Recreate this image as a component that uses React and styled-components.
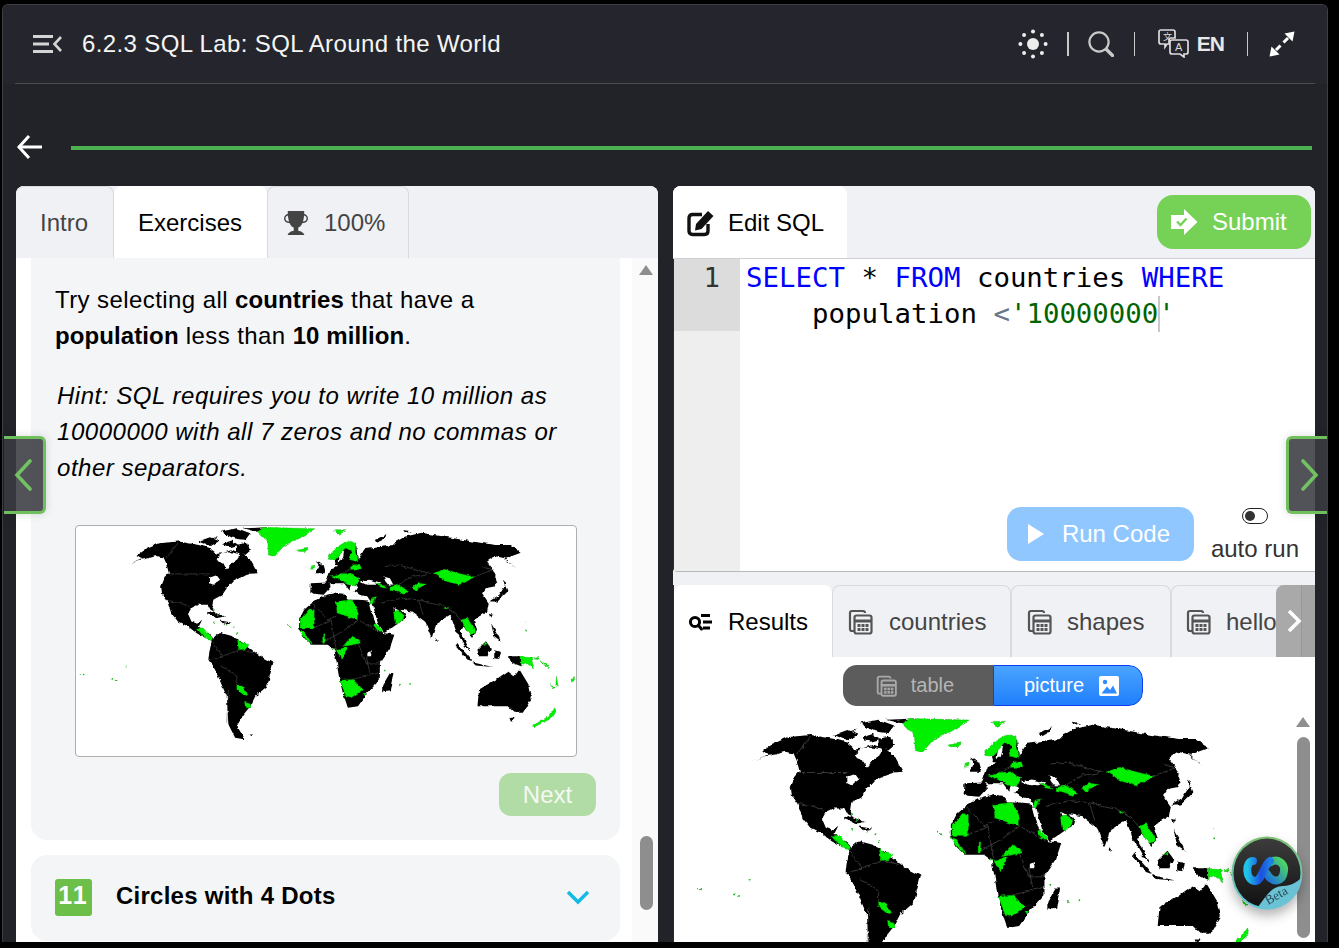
import React from "react"
import styled, { createGlobalStyle } from "styled-components"
import { BsTrophyFill } from "react-icons/bs"

const GlobalStyle = createGlobalStyle`
  html, body {
    margin: 0;
    height: 948px;
    overflow: hidden;
    background: #000;
    font-family: "Liberation Sans", Arial, sans-serif;
  }
  * { box-sizing: border-box; }
`

const Shell = styled.div`
  position: relative;
  width: 1326px;
  height: 938px;
  margin: 4px 0 0 2px;
  background: #212329;
  border: 1px solid #3c3e44;
  border-bottom: 0;
  border-radius: 6px 6px 0 0;
  display: flex;
  flex-direction: column;
  overflow: hidden;
`

const Header = styled.header`
  height: 79px;
  flex: none;
  background: #25262d;
  padding: 0 12px;
`

const HeaderInner = styled.div`
  height: 100%;
  display: flex;
  align-items: center;
  border-bottom: 1px solid #4a4c51;
  padding: 0 20px 1px 18px;
  color: #f2f2f2;
`

const Title = styled.h1`
  margin: 0 0 0 19px;
  font-size: 24px;
  font-weight: 400;
  letter-spacing: .37px;
  color: #f5f5f5;
`

const HeaderTools = styled.div`
  margin-left: auto;
  display: flex;
  align-items: center;
`

const Divider = styled.span`
  width: ${({ $w }) => $w || 1}px;
  height: 24px;
  background: #c8c8c8;
  margin: 0 ${({ $r }) => $r}px 0 ${({ $l }) => $l}px;
`

const LangText = styled.span`
  font-size: 21px;
  font-weight: 700;
  letter-spacing: -1px;
  color: #e8e8e8;
  margin-left: 8px;
`

const ProgressRow = styled.div`
  height: 102px;
  flex: none;
  display: flex;
  align-items: flex-end;
  padding: 0 15px 26px 14px;
  gap: 28px;
`

const ProgressLine = styled.div`
  flex: 1;
  height: 4px;
  margin-bottom: 10px;
  background: #4caf50;
`

const Workspace = styled.main`
  flex: 1;
  min-height: 0;
  display: flex;
  gap: 15px;
  padding: 0 12px 0 13px;
`

const LeftPanel = styled.section`
  width: 642px;
  display: flex;
  flex-direction: column;
  background: #fff;
  border-radius: 8px 8px 0 0;
  overflow: hidden;
`

const RightColumn = styled.section`
  width: 642px;
  display: flex;
  flex-direction: column;
  background: #f0f1f5;
  border-radius: 8px 8px 0 0;
  overflow: hidden;
`

const TabBar = styled.div`
  position: relative;
  height: ${({ $line }) => ($line ? 73 : 72)}px;
  flex: none;
  display: flex;
  align-items: stretch;
  background: #f0f1f5;
  border-bottom: ${({ $line }) => ($line ? "1px solid #d0d0d4" : "0")};
  overflow: hidden;
`

const Tab = styled.div`
  width: ${({ $w }) => $w}px;
  flex: none;
  display: flex;
  align-items: center;
  padding-left: ${({ $pad }) => $pad}px;
  gap: ${({ $gap }) => $gap || 0}px;
  font-size: 24px;
  color: ${({ $active }) => ($active ? "#000" : "#444")};
  background: ${({ $active }) => ($active ? "#fff" : "transparent")};
  border: 1px solid #d9dade;
  border-width: 1px 1px 0 ${({ $first }) => ($first ? 0 : 1)}px;
  border-color: ${({ $active }) => ($active ? "#fff" : "#d9dade")};
  border-radius: 8px 8px 0 0;
`

const LeftBody = styled.div`
  flex: 1;
  min-height: 0;
  display: flex;
  padding-left: 15px;
`

const ExerciseList = styled.div`
  width: 589px;
  flex: none;
  display: flex;
  flex-direction: column;
  gap: 15px;
`

const ExerciseCard = styled.article`
  height: 582px;
  flex: none;
  padding: 24px;
  background: #f4f5f7;
  border-radius: 0 0 16px 16px;
  display: flex;
  flex-direction: column;
`

const Para = styled.p`
  margin: 0 0 24px;
  padding-left: ${({ $italic }) => ($italic ? 2 : 0)}px;
  font-size: 24px;
  line-height: 36px;
  color: #000;
  letter-spacing: ${({ $italic }) => ($italic ? ".53px" : ".42px")};
  font-style: ${({ $italic }) => ($italic ? "italic" : "normal")};
`

const Strong = styled.b`
  letter-spacing: .1px;
`

const MapFrame = styled.div`
  width: 502px;
  height: 233px;
  margin: 15px 0 16px 20px;
  background: #fff;
  border: 1px solid #aeaeae;
  border-radius: 4px;
  overflow: hidden;
`

const NextButton = styled.button`
  align-self: flex-end;
  width: 97px;
  height: 43px;
  border: 0;
  border-radius: 12px;
  background: #b2dca5;
  color: #f5f9f3;
  font: 24px "Liberation Sans", Arial, sans-serif;
`

const CollapsedCard = styled.article`
  height: 86px;
  flex: none;
  display: flex;
  align-items: center;
  padding: 0 30px 2px 24px;
  background: #f4f5f7;
  border-radius: 16px;
`

const NumberBadge = styled.span`
  width: 37px;
  height: 37px;
  border-radius: 3px;
  background: #6cc04a;
  color: #fff;
  font-size: 25px;
  font-weight: 700;
  letter-spacing: 2px;
  text-align: center;
  line-height: 33px;
`

const CardTitle = styled.h3`
  margin: -2px 0 0 24px;
  font-size: 24px;
  font-weight: 700;
  letter-spacing: .25px;
  color: #000;
`

const Chevron = styled.svg`
  margin-left: auto;
`

const ScrollColumn = styled.div`
  flex: 1;
  display: flex;
  flex-direction: column;
  align-items: center;
  padding: 7px 6px 32px 19px;
  background: linear-gradient(to right, #fff 12px, #fafafa 12px);
`

const ScrollArrow = styled.div`
  width: 0;
  height: 0;
  border: 7.5px solid transparent;
  border-top: 0;
  border-bottom: 10px solid #8e8e8e;
`

const ScrollThumb = styled.div`
  width: 13px;
  height: ${({ $h }) => $h}px;
  margin-top: ${({ $top }) => $top};
  border-radius: 7px;
  background: #8e8e8e;
`

const EditorPanel = styled.div`
  height: 386px;
  flex: none;
  display: flex;
  flex-direction: column;
  background: #fff;
`

const SubmitButton = styled.button`
  position: absolute;
  top: 9px;
  right: 4px;
  width: 154px;
  height: 54px;
  border: 0;
  border-radius: 16px;
  background: #76d157;
  color: #fff;
  font: 24px "Liberation Sans", Arial, sans-serif;
  display: flex;
  align-items: center;
  gap: 14px;
  padding: 0 0 0 14px;
`

const EditorBody = styled.div`
  flex: 1;
  min-height: 0;
  display: flex;
  border-left: 1px solid #2a2a2a;
  border-bottom: 1px solid #b9b9b9;
  border-radius: 0 0 0 4px;
`

const Gutter = styled.div`
  width: 66px;
  flex: none;
  background: #eee;
`

const ActiveLineNumber = styled.div`
  height: 72px;
  padding: 0 20px 0 0;
  background: #dcdcdc;
  color: #333;
  text-align: right;
  font: 27.4px/38px "DejaVu Sans Mono", monospace;
`

const CodeArea = styled.div`
  flex: 1;
  min-width: 0;
  display: flex;
  flex-direction: column;
  padding: 1px 16px 10px 6px;
`

const CodeLine = styled.div`
  font: 27.4px/36px "DejaVu Sans Mono", monospace;
  white-space: pre;
  color: #000;
  padding-left: ${({ $indent }) => $indent || 0}px;
`

const Keyword = styled.span`
  color: #0000ff;
`

const StringToken = styled.span`
  color: #006400;
`

const OperatorToken = styled.span`
  color: #687687;
`

const Caret = styled.span`
  display: inline-block;
  width: 2px;
  height: 36px;
  margin: 0 -2px 0 0;
  vertical-align: top;
  background: #c8c8c8;
`

const EditorFooter = styled.div`
  margin-top: auto;
  display: flex;
  align-items: flex-end;
  justify-content: flex-end;
  gap: 17px;
`

const RunButton = styled.button`
  width: 187px;
  height: 54px;
  border: 0;
  border-radius: 14px;
  background: #90c7ff;
  color: #fff;
  font: 24px "Liberation Sans", Arial, sans-serif;
  display: flex;
  align-items: center;
  gap: 18px;
  padding: 0 0 0 21px;
`

const AutoRun = styled.div`
  display: flex;
  flex-direction: column;
  align-items: center;
  gap: 11px;
  margin-bottom: -2px;
  font-size: 24px;
  line-height: 28px;
  color: #333;
`

const MiniSwitch = styled.span`
  width: 26px;
  height: 16px;
  padding: 2px;
  border: 1.5px solid #222;
  border-radius: 8px;
  background: #fff;
  display: flex;
`

const MiniKnob = styled.span`
  width: 10px;
  height: 10px;
  border-radius: 50%;
  background: #333;
`

const PanelGap = styled.div`
  height: 13px;
  flex: none;
`

const ResultsPanel = styled.div`
  position: relative;
  flex: 1;
  min-height: 0;
  display: flex;
  flex-direction: column;
  background: #fff;
  border-left: 1px solid #2a2a2a;
`

const TabScroll = styled.div`
  position: absolute;
  right: 0;
  top: 0;
  bottom: 0;
  width: 39px;
  background: #a9a9a9;
  border-radius: 8px 0 0 0;
  display: flex;
  align-items: center;
  padding-left: 10px;
  box-shadow: inset -13px 0 0 #a4a4a4, inset -14px 0 0 #999;
`

const ViewToggle = styled.div`
  align-self: center;
  margin: 8px 3px 0 0;
  width: 300px;
  height: 41px;
  flex: none;
  display: flex;
  border-radius: 14px;
  overflow: hidden;
  font-size: 20px;
`

const ToggleOption = styled.div`
  flex: 0 0 150px;
  display: flex;
  align-items: center;
  justify-content: center;
  gap: ${({ $on }) => ($on ? 15 : 13)}px;
  padding: ${({ $on }) => ($on ? "0 0 0 7px" : "0 6px 0 0")};
  color: ${({ $on }) => ($on ? "#fff" : "#b5b5b5")};
  background: ${({ $on }) => ($on ? "linear-gradient(#4ba4ff, #1f7ffc)" : "#5c5c5c")};
  border: ${({ $on }) => ($on ? "1px solid #0c3ef0" : "0")};
  border-radius: ${({ $on }) => ($on ? "0 14px 14px 0" : "0")};
`

const ResultBody = styled.div`
  flex: 1;
  min-height: 0;
  display: flex;
  overflow: hidden;
`

const ResultMapArea = styled.div`
  width: 622px;
  flex: none;
  padding: 11px 0 0 18px;
`

const ResultScroll = styled.div`
  flex: 1;
  display: flex;
  flex-direction: column;
  align-items: center;
  padding: 11px 6px 0 0;
`

const BetaBubble = styled.div`
  position: absolute;
  right: 12px;
  bottom: 32px;
  width: 72px;
  height: 74px;
  filter: drop-shadow(0 6px 6px rgba(0, 0, 0, .3));
`

const SideNav = styled.div`
  position: absolute;
  top: 431px;
  ${({ $side }) => ($side === "left" ? "left: 1px;" : "right: 0;")}
  width: ${({ $side }) => ($side === "left" ? 42 : 41)}px;
  height: 78px;
  display: flex;
  align-items: center;
  justify-content: ${({ $side }) => ($side === "left" ? "flex-start" : "center")};
  padding-left: ${({ $side }) => ($side === "left" ? 10 : 4)}px;
  background: rgba(58, 59, 65, .88);
  border: 3px solid #6fc05d;
  border-width: ${({ $side }) => ($side === "left" ? "3px 3px 3px 0" : "3px 0 3px 3px")};
  border-radius: ${({ $side }) => ($side === "left" ? "0 6px 6px 0" : "6px 0 0 6px")};
  box-shadow: 0 0 8px rgba(0, 0, 0, .15);
`

const MapImage = styled.svg`
  display: block;
  width: ${({ $w }) => $w}px;
  height: ${({ $h }) => $h}px;
`

const BLACK_LAND = [
  "192,145 237,125 222,115 242,100 287,80 347,75 407,85 440,95 462,112 477,110 505,100 537,110 560,130 582,170 560,172 537,180 507,195 490,215 477,235 450,250 447,270 452,285 442,280 434,265 405,265 385,275 375,292 385,315 402,322 417,310 407,330 440,355 455,372 440,368 420,362 400,350 375,330 345,315 325,290 312,252 298,232 295,210 305,185 318,170 310,140 302,122 280,118 258,125 228,130",
  "405,75 440,62 470,75 440,88",
  "470,45 520,35 560,50 545,70 510,65",
  "520,85 548,78 562,100 545,115 520,105",
  "540,35 615,32 580,45",
  "425,72 465,58 450,68",
  "475,82 505,72 525,85 500,92",
  "450,285 485,300 465,304 432,292",
  "470,312 505,318 480,322",
  "445,372 470,350 505,360 525,370 565,400 590,420 628,440 610,510 575,540 560,570 540,595 520,630 545,670 515,665 495,625 490,540 455,460 435,430",
  "555,655 568,655 560,660",
  "740,200 790,198 802,208 778,235 748,232 738,225",
  "755,130 775,145 782,170 755,170 765,150",
  "810,130 845,90 875,90 880,135 860,145 830,150 815,145",
  "785,200 800,155 860,135 900,130 905,200",
  "899,98 944,92 984,85 994,75 1019,60 1069,48 1139,60 1219,75 1289,85 1334,85 1366,108 1334,120 1318,128 1344,150 1351,158 1319,125 1289,118 1264,135 1279,155 1294,200 1284,210 1260,215 1249,230 1269,260 1264,285 1224,310 1234,340 1219,365 1194,330 1185,345 1215,408 1195,385 1172,345 1154,295 1114,320 1099,365 1079,315 1039,285 1009,280 1027,300 994,325 959,350 939,320 924,265 908,240 885,235 870,225 880,208 860,200 855,222 835,195 815,190 860,150 880,130",
  "705,335 705,310 720,280 745,258 780,238 815,228 835,232 850,250 880,250 910,252 925,310 955,350 988,355 975,395 945,440 945,490 905,535 880,570 850,575 835,530 825,490 815,430 810,400 790,385 740,385 720,365",
  "975,470 985,470 975,525 955,528 955,505",
  "1110,365 1118,375 1110,378",
  "1175,380 1220,435 1205,430 1170,390",
  "1220,438 1280,452 1230,448",
  "1235,400 1260,375 1275,395 1265,420 1240,420",
  "1285,405 1305,410 1298,428 1285,425",
  "1275,320 1290,345 1305,375 1285,360",
  "1270,255 1300,235 1322,200 1310,190 1325,225 1295,255",
  "1275,150 1290,180 1282,180",
  "1272,290 1282,292 1276,304",
  "1320,420 1365,420 1365,450 1340,440",
  "1235,570 1240,520 1290,490 1325,465 1345,480 1360,460 1390,510 1397,545 1370,590 1345,590 1325,570 1280,570",
  "1330,605 1345,605 1335,618",
  "1015,40 1040,45 1020,48",
  "930,70 965,52 950,72 935,78",
]

const WHITE_WATER = [
  "458,125 480,108 505,108 528,112 522,128 505,140 490,160 480,140 465,135",
  "440,183 460,176 470,190 450,205 440,200",
  "885,195 910,190 950,198 940,205 905,205",
  "955,180 975,185 985,205 970,205 962,195",
  "985,272 1005,282 990,285",
  "905,410 917,405 920,420 905,420",
  "825,100 840,95 835,125 820,135",
]

const GREEN_LAND = [
  "582,45 600,32 752,36 707,65 662,85 632,120 614,115 612,75",
  "700,100 730,95 725,105 705,105",
  "805,42 845,42 825,52",
  "742,148 752,145 750,157 740,158",
  "792,118 820,90 850,72 875,80 872,105 880,135 855,130 862,105 845,95 825,115 812,130 795,128",
  "865,145 885,142 890,160 860,158",
  "800,178 830,172 860,170 885,185 875,205 850,205 825,190",
  "400,335 420,335 450,370 425,365",
  "522,368 535,380 560,385 545,398 525,400",
  "520,505 540,510 553,535 545,540 520,520",
  "543,555 560,560 560,575 545,575",
  "815,255 860,250 878,270 878,310 818,290",
  "708,310 735,278 750,280 750,335 708,335",
  "705,340 720,345 745,385 730,375",
  "775,352 782,352 780,378 775,378",
  "835,390 865,355 890,380 850,388",
  "815,400 850,392 830,430",
  "825,492 865,490 895,520 860,545 845,540",
  "925,325 935,320 955,345 940,345",
  "895,532 905,530 900,542",
  "930,200 955,205 965,215 945,212",
  "975,212 1000,203 1030,225 1020,235 995,225 975,222",
  "1040,215 1060,200 1085,203 1060,215 1055,225",
  "1104,170 1139,158 1179,170 1227,182 1184,205 1144,195",
  "920,245 935,240 925,265 915,262",
  "985,282 1002,282 1018,298 1000,325 990,318",
  "1135,272 1150,272 1145,278",
  "1188,310 1205,305 1230,345 1215,360 1200,340",
  "1252,385 1262,378 1260,390",
  "1365,420 1395,425 1405,458 1380,440 1365,450",
  "1400,428 1418,420 1412,430",
  "1398,630 1450,598 1465,575 1470,590 1445,612 1405,632",
  "1420,430 1450,455 1445,460",
  "1470,480 1475,510 1468,505",
  "1452,505 1465,515 1458,518",
  "1510,490 1525,484 1515,498",
]

const GREEN_DOTS = [
  [455, 280], [465, 295], [452, 318], [490, 325], [512, 330], [522, 350], [672, 328], [680, 332],
  [55, 473], [65, 475], [150, 488], [160, 492], [190, 452], [1005, 505], [1035, 503], [960, 463],
  [1378, 320], [1380, 340], [808, 400], [1140, 270],
]

const BORDER_LINES = [
  "318,172 440,172",
  "345,80 310,125",
  "312,252 350,258 380,272",
  "445,370 475,420 440,430",
  "475,420 530,400 570,410",
  "475,450 520,480 520,505",
  "495,520 490,620",
  "745,260 790,310 815,300",
  "750,335 800,310 815,400",
  "780,375 835,345 880,310 950,350",
  "880,380 905,440 945,440",
  "860,490 905,480 940,470",
  "905,420 915,470",
  "945,205 1000,205 1040,180 1100,170",
  "1222,182 1280,160 1250,150",
  "960,150 1000,145 1090,170",
  "1075,300 1060,250 1095,260 1140,270 1170,290",
  "1010,245 1060,250",
  "950,260 1010,245",
  "810,180 880,150",
  "1170,290 1195,320",
]

const WorldMap = ({ w, h }) => (
  <MapImage $w={w} $h={h} viewBox="42 28 1486 695" preserveAspectRatio="none">
    <defs>
      <filter id={`coast${w}`} x="0" y="0" width="100%" height="100%" colorInterpolationFilters="sRGB">
        <feTurbulence type="fractalNoise" baseFrequency="0.06" numOctaves="3" seed="4" result="noise" />
        <feDisplacementMap in="SourceGraphic" in2="noise" scale="11" xChannelSelector="R" yChannelSelector="G" />
        <feGaussianBlur stdDeviation="0.5" />
      </filter>
    </defs>
    <g filter={`url(#coast${w})`}>
      <g fill="#000">
        {BLACK_LAND.map((p) => <polygon key={p} points={p} />)}
      </g>
      <g fill="#fff">
        {WHITE_WATER.map((p) => <polygon key={p} points={p} />)}
      </g>
      <g fill="none" stroke="#5a5a5a" strokeWidth="1.6">
        {BORDER_LINES.map((p) => <polyline key={p} points={p} />)}
      </g>
      <g fill="#00f000" stroke="#0aa00a" strokeWidth="1">
        {GREEN_LAND.map((p) => <polygon key={p} points={p} />)}
      </g>
      <g fill="#17b017">
        {GREEN_DOTS.map(([x, y]) => <circle key={x + "-" + y} cx={x} cy={y} r="2.4" />)}
      </g>
    </g>
  </MapImage>
)

const TableIcon = ({ color = "#555", size = 26 }) => (
  <svg width={size} height={size} viewBox="0 0 26 26" fill="none" stroke={color} strokeWidth="2.2">
    <path d="M6 22 H4 Q2 22 2 20 V4 Q2 2 4 2 H15 Q17 2 17 4" />
    <rect x="6.5" y="6.5" width="17" height="18" rx="2" />
    <path d="M6.5 12 H23.5" strokeWidth="3" />
    <g fill={color} stroke="none">
      {[10, 14, 18].map((x) => [16, 20].map((y) => <rect key={x + "-" + y} x={x - 0.5} y={y - 1} width="3" height="3" />))}
    </g>
  </svg>
)

const ResultsIcon = () => (
  <svg width="25" height="20" viewBox="0 0 25 20" fill="none" stroke="#000" strokeWidth="3">
    <circle cx="7" cy="10" r="4.6" />
    <path d="M10.5 13.5 L13.5 17" strokeLinecap="round" />
    <path d="M13 3.5 H22 M15 10 H24 M15 16 H22" />
  </svg>
)

const EditIcon = () => (
  <svg width="28" height="28" viewBox="0 0 28 28" fill="none">
    <path d="M21 15 V22 Q21 25.5 17.5 25.5 H5.5 Q2 25.5 2 22 V9 Q2 5.5 5.5 5.5 H15" stroke="#111" strokeWidth="3.4" />
    <path d="M9 15 L21 2 L26.5 7 L14.5 20 L8 21.5 Z" fill="#111" />
  </svg>
)

const MenuIcon = () => (
  <svg width="30" height="20" viewBox="0 0 30 20" stroke="#d4d4d4" strokeWidth="3" fill="none">
    <path d="M0 2.5 H20 M0 10 H16 M0 17.5 H20" />
    <path d="M28 3 L21.5 10 L28 17" strokeWidth="2.6" />
  </svg>
)

const SunIcon = () => (
  <svg width="30" height="30" viewBox="0 0 30 30" fill="#ededed">
    <circle cx="15" cy="15" r="6" />
    {[0, 45, 90, 135, 180, 225, 270, 315].map((a) => (
      <circle key={a} cx={15 + 12.6 * Math.cos((a * Math.PI) / 180)} cy={15 + 12.6 * Math.sin((a * Math.PI) / 180)} r="2" />
    ))}
  </svg>
)

const SearchIcon = () => (
  <svg width="26" height="26" viewBox="0 0 26 26" fill="none" stroke="#c9c9c9" strokeWidth="2.2">
    <circle cx="11" cy="11" r="9.6" />
    <path d="M18.5 18.5 L24.5 24.5" strokeWidth="3.4" strokeLinecap="round" />
  </svg>
)

const TranslateIcon = () => (
  <svg width="31" height="29" viewBox="0 0 31 29" fill="none" stroke="#dcdcdc" strokeWidth="1.7">
    <path d="M3 1 H15 Q17 1 17 3 V9 H13 Q11 9 11 11 V15 H9 L7 18 V15 H3 Q1 15 1 13 V3 Q1 1 3 1 Z" />
    <path d="M14 11 H28 Q30 11 30 13 V23 Q30 25 28 25 H26 V28 L22 25 H14 Q12 25 12 23 V13 Q12 11 14 11 Z" />
    <text x="5" y="11" fontSize="9" fill="#dcdcdc" stroke="none" fontFamily="Noto Sans CJK SC, sans-serif">文</text>
    <text x="17" y="22" fontSize="11" fill="#dcdcdc" stroke="none" fontFamily="Liberation Sans, sans-serif">A</text>
  </svg>
)

const ExpandIcon = () => (
  <svg width="26" height="26" viewBox="0 0 26 26" fill="#fff" stroke="#fff">
    <path d="M19 7 L14.5 11.5 M11.5 14.5 L7 19" strokeWidth="3" />
    <path d="M15.5 2.5 L25.5 0.5 L23.5 10.5 Z M0.5 25.5 L2.5 15.5 L10.5 23.5 Z" stroke="none" />
  </svg>
)

const BackArrow = () => (
  <svg width="26" height="26" viewBox="0 0 26 26" fill="none" stroke="#fff" strokeWidth="3">
    <path d="M1.5 13 H25" />
    <path d="M12 2 L2 13 L12 24" />
  </svg>
)

const SubmitIcon = () => (
  <svg width="27" height="26" viewBox="0 0 27 26">
    <path d="M0 6 H13 V0 L26.5 13 L13 26 V20 H0 Z" fill="#fff" />
    <path d="M6 12.5 L9.5 16 L15.5 9.5" fill="none" stroke="#76d157" strokeWidth="2.4" />
  </svg>
)

const PictureIcon = () => (
  <svg width="20" height="20" viewBox="0 0 20 20">
    <rect width="20" height="20" rx="2" fill="#fff" />
    <circle cx="6" cy="6" r="2.2" fill="#2e8bff" />
    <path d="M2.5 17.5 L8 10.5 L11 14 L14 9.5 L18 17.5 Z" fill="#2e8bff" />
  </svg>
)

const BetaLogo = () => (
  <svg width="72" height="74" viewBox="0 0 72 74">
    <defs>
      <linearGradient id="bubbleRing" x1="0" y1="0" x2="0" y2="1">
        <stop offset="0" stopColor="#7dc16e" />
        <stop offset="1" stopColor="#5fc6df" />
      </linearGradient>
      <linearGradient id="bubbleFace" x1="0" y1="0" x2="0" y2="1">
        <stop offset="0" stopColor="#3c3c3c" />
        <stop offset="1" stopColor="#111" />
      </linearGradient>
      <linearGradient id="waveA" x1="0" y1="0" x2="1" y2="0">
        <stop offset="0" stopColor="#20c4e8" />
        <stop offset=".6" stopColor="#1b4fe0" />
        <stop offset="1" stopColor="#1e7fe0" />
      </linearGradient>
      <linearGradient id="waveB" x1="0" y1="1" x2="1" y2="0">
        <stop offset="0" stopColor="#1b6fe0" />
        <stop offset="1" stopColor="#4fd85e" />
      </linearGradient>
    </defs>
    <ellipse cx="36" cy="37" rx="35.5" ry="36.5" fill="url(#bubbleRing)" />
    <ellipse cx="36" cy="37" rx="33.5" ry="34.5" fill="url(#bubbleFace)" />
    <path d="M27 71 C34 62 40 50 52 50 C60 50 66 46 70 42 C70 60 54 73 36 73 C33 73 30 72 27 71 Z" fill="#69c3d5" />
    <path d="M36 38 C42 48 52 46 53 35 C54 27 46 22 40 26" fill="none" stroke="url(#waveB)" strokeWidth="8" strokeLinecap="round" />
    <path d="M22 25 C14 25 14 44 24 45 C31 45 32 30 39 25" fill="none" stroke="url(#waveA)" strokeWidth="8" strokeLinecap="round" />
    <text x="37" y="69" fontSize="13" fill="#2b4a55" fontFamily="Liberation Serif, serif" transform="rotate(-30 37 69)">Beta</text>
  </svg>
)

export default function App() {
  return (
    <>
      <GlobalStyle />
      <Shell>
        <Header>
          <HeaderInner>
            <MenuIcon />
            <Title>6.2.3 SQL Lab: SQL Around the World</Title>
            <HeaderTools>
              <SunIcon />
              <Divider $w={2} $l={19} $r={19} />
              <SearchIcon />
              <Divider $l={20} $r={23} />
              <TranslateIcon />
              <LangText>EN</LangText>
              <Divider $l={23} $r={21} />
              <ExpandIcon />
            </HeaderTools>
          </HeaderInner>
        </Header>

        <ProgressRow>
          <BackArrow />
          <ProgressLine />
        </ProgressRow>

        <Workspace>
          <LeftPanel>
            <TabBar>
              <Tab $w={98} $pad={24} $first>Intro</Tab>
              <Tab $w={153} $pad={23} $active>Exercises</Tab>
              <Tab $w={142} $pad={16} $gap={16}>
                <BsTrophyFill size={24} color="#444" />
                100%
              </Tab>
            </TabBar>
            <LeftBody>
              <ExerciseList>
                <ExerciseCard>
                  <Para>
                    Try selecting all <Strong>countries</Strong> that have a <Strong>population</Strong> less than <Strong>10 million</Strong>.
                  </Para>
                  <Para $italic>
                    Hint: SQL requires you to write 10 million as 10000000 with all 7 zeros and no commas or other separators.
                  </Para>
                  <MapFrame>
                    <WorldMap w={500} h={231} />
                  </MapFrame>
                  <NextButton>Next</NextButton>
                </ExerciseCard>
                <CollapsedCard>
                  <NumberBadge>11</NumberBadge>
                  <CardTitle>Circles with 4 Dots</CardTitle>
                  <Chevron width="24" height="16" viewBox="0 0 24 16" fill="none" stroke="#14b9e6" strokeWidth="3.4">
                    <path d="M2 3 L12 13 L22 3" />
                  </Chevron>
                </CollapsedCard>
              </ExerciseList>
              <ScrollColumn>
                <ScrollArrow />
                <ScrollThumb $h={74} $top="auto" />
              </ScrollColumn>
            </LeftBody>
          </LeftPanel>

          <RightColumn>
            <EditorPanel>
              <TabBar $line>
                <Tab $w={174} $pad={14} $gap={13} $first $active>
                  <EditIcon />
                  Edit SQL
                </Tab>
                <SubmitButton>
                  <SubmitIcon />
                  Submit
                </SubmitButton>
              </TabBar>
              <EditorBody>
                <Gutter>
                  <ActiveLineNumber>1</ActiveLineNumber>
                </Gutter>
                <CodeArea>
                  <CodeLine><Keyword>SELECT</Keyword> * <Keyword>FROM</Keyword> countries <Keyword>WHERE</Keyword></CodeLine>
                  <CodeLine $indent={66}>population <OperatorToken>&lt;</OperatorToken><StringToken>'10000000<Caret />'</StringToken></CodeLine>
                  <EditorFooter>
                    <RunButton>
                      <svg width="16" height="20" viewBox="0 0 16 20"><path d="M0 0 L16 10 L0 20 Z" fill="#fff" /></svg>
                      Run Code
                    </RunButton>
                    <AutoRun>
                      <MiniSwitch><MiniKnob /></MiniSwitch>
                      auto run
                    </AutoRun>
                  </EditorFooter>
                </CodeArea>
              </EditorBody>
            </EditorPanel>

            <PanelGap />

            <ResultsPanel>
              <TabBar>
                <Tab $w={158} $pad={14} $gap={15} $first $active>
                  <ResultsIcon />
                  Results
                </Tab>
                <Tab $w={179} $pad={15} $gap={15}>
                  <TableIcon />
                  countries
                </Tab>
                <Tab $w={160} $pad={15} $gap={14}>
                  <TableIcon />
                  shapes
                </Tab>
                <Tab $w={160} $pad={14} $gap={14}>
                  <TableIcon />
                  hello
                </Tab>
                <TabScroll>
                  <svg width="16" height="24" viewBox="0 0 16 24" fill="none" stroke="#fff" strokeWidth="3.6">
                    <path d="M3 2 L13 12 L3 22" />
                  </svg>
                </TabScroll>
              </TabBar>
              <ViewToggle>
                <ToggleOption>
                  <TableIcon color="#a8a8a8" size={22} />
                  table
                </ToggleOption>
                <ToggleOption $on>
                  picture
                  <PictureIcon />
                </ToggleOption>
              </ViewToggle>
              <ResultBody>
                <ResultMapArea>
                  <WorldMap w={580} h={268} />
                </ResultMapArea>
                <ResultScroll>
                  <ScrollArrow />
                  <ScrollThumb $h={201} $top="10px" />
                </ResultScroll>
              </ResultBody>
              <BetaBubble>
                <BetaLogo />
              </BetaBubble>
            </ResultsPanel>
          </RightColumn>
        </Workspace>

        <SideNav $side="left">
          <svg width="18" height="32" viewBox="0 0 18 32" fill="none" stroke="#72c162" strokeWidth="3.6" strokeLinecap="round">
            <path d="M16 2 L3 16 L16 30" />
          </svg>
        </SideNav>
        <SideNav $side="right">
          <svg width="18" height="32" viewBox="0 0 18 32" fill="none" stroke="#72c162" strokeWidth="3.6" strokeLinecap="round">
            <path d="M2 2 L15 16 L2 30" />
          </svg>
        </SideNav>
      </Shell>
    </>
  )
}
